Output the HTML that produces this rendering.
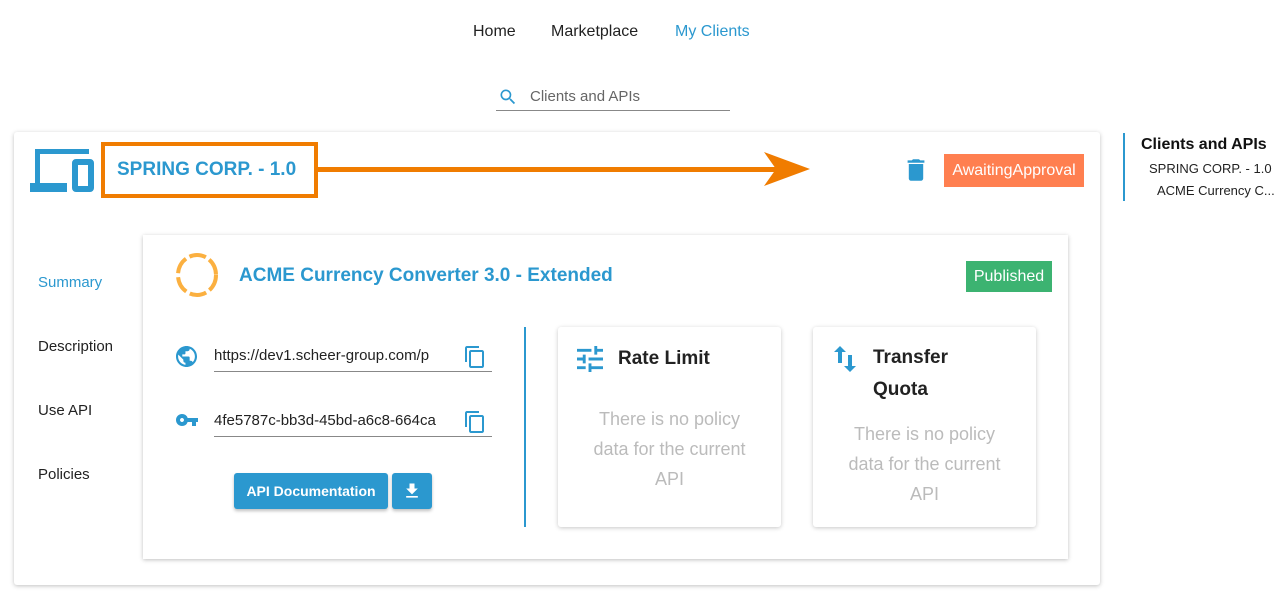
<!DOCTYPE html>
<html><head><style>
*{box-sizing:border-box;margin:0;padding:0}
body{width:1278px;height:604px;background:#fff;font-family:"Liberation Sans",sans-serif;position:relative;overflow:hidden;color:#222}
.a{position:absolute;white-space:nowrap}
.blue{color:#2b98cf}
</style></head><body>
<div class="a" style="left:473px;top:23px;font-size:16px">Home</div>
<div class="a" style="left:551px;top:23px;font-size:16px">Marketplace</div>
<div class="a blue" style="left:675px;top:23px;font-size:16px">My Clients</div>

<svg class="a" style="left:498px;top:87px" width="20" height="20" viewBox="0 0 24 24"><path fill="#2b98cf" d="M15.5 14h-.79l-.28-.27A6.47 6.47 0 0 0 16 9.5 6.5 6.5 0 1 0 9.5 16c1.61 0 3.09-.59 4.23-1.57l.27.28v.79l5 4.99L20.49 19l-4.99-5zm-6 0C7.01 14 5 11.99 5 9.5S7.01 5 9.5 5 14 7.01 14 9.5 11.99 14 9.5 14z"/></svg>
<div class="a" style="left:530px;top:88px;font-size:15px;color:#666">Clients and APIs</div>
<div class="a" style="left:496px;top:110px;width:234px;height:1px;background:#888"></div>

<div class="a" style="left:14px;top:132px;width:1086px;height:453px;background:#fff;box-shadow:0 1px 4px rgba(0,0,0,.25);border-radius:3px"></div>

<svg class="a" style="left:30px;top:149px" width="65" height="44" viewBox="0 0 65 44"><path fill="#2b98cf" d="M5 0h54v5H10v29H5z M0 34h37v9H0z M46 10h14a4 4 0 0 1 4 4v25a4 4 0 0 1-4 4H46a4 4 0 0 1-4-4V14a4 4 0 0 1 4-4zm2 6v21h10V16z"/></svg>
<div class="a" style="left:101px;top:142px;width:217px;height:56px;border:4px solid #f07c00"></div>
<div class="a" style="left:117px;top:159px;font-size:19px;font-weight:bold;color:#2b98cf">SPRING CORP. - 1.0</div>
<div class="a" style="left:317px;top:167px;width:460px;height:5px;background:#f07c00"></div>
<svg class="a" style="left:764px;top:152px" width="48" height="35"><path fill="#f07c00" d="M0 0L46 17L0 34L12 17z"/></svg>

<svg class="a" style="left:906px;top:158px" width="20" height="24" viewBox="4 2 16 20"><path fill="#2b98cf" d="M6 19c0 1.1.9 2 2 2h8c1.1 0 2-.9 2-2V7H6v12zM19 4h-3.5l-1-1h-5l-1 1H5v2h14V4z"/></svg>
<div class="a" style="left:944px;top:154px;width:140px;height:33px;background:#ff7f50;color:#fff;font-size:16px;line-height:33px;text-align:center">AwaitingApproval</div>

<div class="a" style="left:1123px;top:133px;width:2px;height:68px;background:#2b98cf"></div>
<div class="a" style="left:1141px;top:136px;font-size:16px;font-weight:bold;color:#111">Clients and APIs</div>
<div class="a" style="left:1149px;top:161px;font-size:13px;color:#222">SPRING CORP. - 1.0</div>
<div class="a" style="left:1157px;top:183px;font-size:13px;color:#222">ACME Currency C...</div>

<div class="a blue" style="left:38px;top:274px;font-size:15px">Summary</div>
<div class="a" style="left:38px;top:338px;font-size:15px">Description</div>
<div class="a" style="left:38px;top:402px;font-size:15px">Use API</div>
<div class="a" style="left:38px;top:466px;font-size:15px">Policies</div>

<div class="a" style="left:143px;top:235px;width:925px;height:324px;background:#fff;box-shadow:0 1px 4px rgba(0,0,0,.25)"></div>
<svg class="a" style="left:174px;top:252px" width="46" height="46" viewBox="0 0 46 46"><ellipse cx="23" cy="23" rx="19" ry="20" fill="none" stroke="#fbb040" stroke-width="4" stroke-dasharray="17 4"/></svg>
<div class="a" style="left:239px;top:265px;font-size:19px;font-weight:bold;color:#2b98cf">ACME Currency Converter 3.0 - Extended</div>
<div class="a" style="left:966px;top:261px;width:86px;height:31px;background:#3cb371;color:#fff;font-size:16px;line-height:31px;text-align:center">Published</div>

<svg class="a" style="left:176px;top:346px" width="21" height="21" viewBox="2 2 20 20"><path fill="#2b98cf" d="M12 2C6.48 2 2 6.48 2 12s4.48 10 10 10 10-4.48 10-10S17.52 2 12 2zm-1 17.93c-3.950-.49-7-3.850-7-7.930 0-.62.08-1.21.21-1.79L9 15v1c0 1.1.9 2 2 2v1.93zm6.9-2.54c-.26-.81-1-1.39-1.9-1.39h-1v-3c0-.55-.45-1-1-1H8v-2h2c.55 0 1-.45 1-1V7h2c1.1 0 2-.9 2-2v-.41c2.93 1.19 5 4.06 5 7.41 0 2.08-.8 3.97-2.1 5.39z"/></svg>
<div class="a" style="left:214px;top:347px;font-size:15px;color:#222">https://dev1.scheer-group.com/p</div>
<svg class="a" style="left:465px;top:346px" width="20" height="22" viewBox="2 1 20 22"><path fill="#2b98cf" d="M16 1H4c-1.1 0-2 .9-2 2v14h2V3h12V1zm3 4H8c-1.1 0-2 .9-2 2v14c0 1.1.9 2 2 2h11c1.1 0 2-.9 2-2V7c0-1.1-.9-2-2-2zm0 16H8V7h11v14z"/></svg>
<div class="a" style="left:214px;top:371px;width:278px;height:1px;background:#888"></div>

<svg class="a" style="left:175px;top:410px" width="24" height="20" viewBox="0 6 24 12"><path fill="#2b98cf" d="M12.65 10A5.99 5.99 0 0 0 7 6c-3.31 0-6 2.69-6 6s2.69 6 6 6a5.990 5.990 0 0 0 5.65-4H17v4h4v-4h2v-4H12.65zM7 14c-1.1 0-2-.9-2-2s.9-2 2-2 2 .9 2 2-.9 2-2 2z"/></svg>
<div class="a" style="left:214px;top:412px;font-size:15px;color:#222">4fe5787c-bb3d-45bd-a6c8-664ca</div>
<svg class="a" style="left:465px;top:411px" width="20" height="22" viewBox="2 1 20 22"><path fill="#2b98cf" d="M16 1H4c-1.1 0-2 .9-2 2v14h2V3h12V1zm3 4H8c-1.1 0-2 .9-2 2v14c0 1.1.9 2 2 2h11c1.1 0 2-.9 2-2V7c0-1.1-.9-2-2-2zm0 16H8V7h11v14z"/></svg>
<div class="a" style="left:214px;top:436px;width:278px;height:1px;background:#888"></div>

<div class="a" style="left:234px;top:473px;width:154px;height:36px;background:#2b98cf;border-radius:3px;color:#fff;font-size:14px;font-weight:bold;line-height:36px;text-align:center;box-shadow:0 2px 3px rgba(0,0,0,.25)">API Documentation</div>
<div class="a" style="left:392px;top:473px;width:40px;height:36px;background:#2b98cf;border-radius:3px;box-shadow:0 2px 3px rgba(0,0,0,.25)"><svg style="position:absolute;left:10px;top:8px" width="20" height="20" viewBox="0 0 24 24"><path fill="#fff" d="M19 9h-4V3H9v6H5l7 7 7-7zM5 18v2h14v-2H5z"/></svg></div>

<div class="a" style="left:524px;top:327px;width:2px;height:200px;background:#2b98cf"></div>

<div class="a" style="left:558px;top:327px;width:223px;height:200px;background:#fff;box-shadow:0 1px 4px rgba(0,0,0,.22);border-radius:3px"></div>
<svg class="a" style="left:576px;top:346px" width="28" height="26" viewBox="3 3 18 18"><path fill="#2b98cf" d="M3 17v2h6v-2H3zM3 5v2h10V5H3zm10 16v-2h8v-2h-8v-2h-2v6h2zM7 9v2H3v2h4v2h2V9H7zm14 4v-2H11v2h10zm-6-4h2V7h4V5h-4V3h-2v6z"/></svg>
<div class="a" style="left:618px;top:348px;font-size:19px;font-weight:bold;color:#222">Rate Limit</div>
<div class="a" style="left:558px;top:404px;width:223px;font-size:18px;line-height:30px;color:#bbb;text-align:center;white-space:normal">There is no policy<br>data for the current<br>API</div>

<div class="a" style="left:813px;top:327px;width:223px;height:200px;background:#fff;box-shadow:0 1px 4px rgba(0,0,0,.22);border-radius:3px"></div>
<svg class="a" style="left:834px;top:346px" width="22" height="26" viewBox="0 0 22 26"><path fill="#2b98cf" d="M6 0l6 6H8v11H4V6H0z M14 9h4v11h4l-6 6-6-6h4z"/></svg>
<div class="a" style="left:873px;top:342px;font-size:19px;font-weight:bold;color:#222;line-height:32px">Transfer<br>Quota</div>
<div class="a" style="left:813px;top:419px;width:223px;font-size:18px;line-height:30px;color:#bbb;text-align:center;white-space:normal">There is no policy<br>data for the current<br>API</div>
</body></html>
